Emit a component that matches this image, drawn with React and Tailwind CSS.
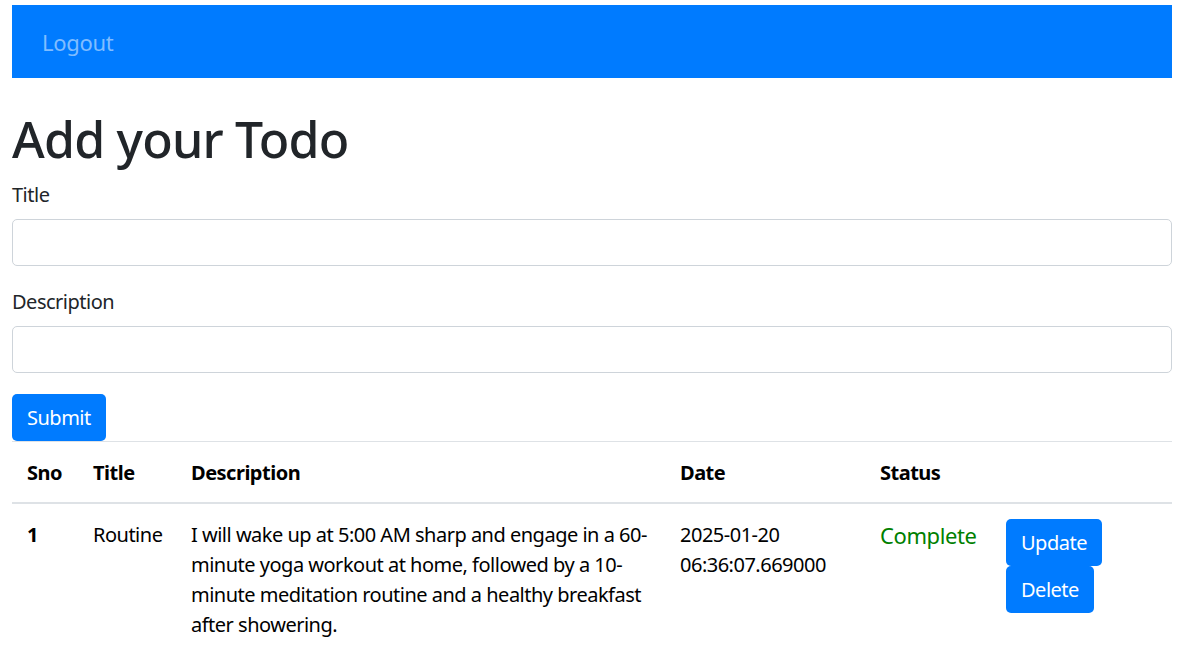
import React from 'react';

const todos = [
  {
    sno: 1,
    title: 'Routine',
    lines: [
      'I will wake up at 5:00 AM sharp and engage in a 60-',
      'minute yoga workout at home, followed by a 10-',
      'minute meditation routine and a healthy breakfast',
      'after showering.',
    ],
    date: '2025-01-20 06:36:07.669000',
    status: 'Complete',
  },
];

export default function App() {
  return (
    <div
      className="min-h-screen bg-white pl-[12px] pr-[9px] pt-[5px] text-[20px] leading-[30px] tracking-[-0.5px] text-[#212529]"
      style={{ fontFamily: '"Noto Sans", "Open Sans", sans-serif' }}
    >
      {/* Navbar */}
      <nav className="flex h-[73px] items-center bg-[#007bff] pl-[30px]">
        <a href="#" className="text-[22px] leading-[30px] tracking-[-0.3px] text-[#80bdff]">
          Logout
        </a>
      </nav>

      <h1 className="mt-[31px] mb-[11px] text-[50px] font-medium leading-[60px] tracking-[-0.8px]">
        Add your Todo
      </h1>

      <form onSubmit={(e) => e.preventDefault()}>
        <div className="mb-[21px]">
          <label className="mb-[9px] block">Title</label>
          <input
            type="text"
            className="block h-[47px] w-full rounded-[5px] border border-[#ced4da] px-[15px]"
          />
        </div>
        <div className="mb-[21px]">
          <label className="mb-[9px] block">Description</label>
          <input
            type="text"
            className="block h-[47px] w-full rounded-[5px] border border-[#ced4da] px-[15px]"
          />
        </div>
        <button
          type="submit"
          className="h-[47px] rounded-[5px] bg-[#007bff] px-[15px] text-white"
        >
          Submit
        </button>
      </form>

      {/* Todo table */}
      <table className="w-full table-fixed border-collapse text-black">
        <colgroup>
          <col className="w-[66px]" />
          <col className="w-[98px]" />
          <col className="w-[489px]" />
          <col className="w-[200px]" />
          <col className="w-[126px]" />
          <col className="w-[181px]" />
        </colgroup>
        <thead>
          <tr>
            <th className="border-t border-b-2 border-[#dee2e6] px-[15px] pt-[16px] pb-[14px] text-left font-bold">Sno</th>
            <th className="border-t border-b-2 border-[#dee2e6] px-[15px] pt-[16px] pb-[14px] text-left font-bold">Title</th>
            <th className="border-t border-b-2 border-[#dee2e6] px-[15px] pt-[16px] pb-[14px] text-left font-bold">Description</th>
            <th className="border-t border-b-2 border-[#dee2e6] px-[15px] pt-[16px] pb-[14px] text-left font-bold">Date</th>
            <th className="border-t border-b-2 border-[#dee2e6] px-[15px] pt-[16px] pb-[14px] text-left font-bold">Status</th>
            <th className="border-t border-b-2 border-[#dee2e6] p-[15px]"></th>
          </tr>
        </thead>
        <tbody>
          {todos.map((todo) => (
            <tr key={todo.sno}>
              <th className="px-[15px] pt-[16px] pb-[14px] text-left align-top font-bold">{todo.sno}</th>
              <td className="px-[15px] pt-[16px] pb-[14px] align-top">{todo.title}</td>
              <td className="px-[15px] pt-[16px] pb-[14px] align-top">
                {todo.lines.map((line) => (
                  <span key={line} className="block whitespace-nowrap">
                    {line}
                  </span>
                ))}
              </td>
              <td className="px-[15px] pt-[16px] pb-[14px] align-top">{todo.date}</td>
              <td className="px-[15px] pt-[16px] pb-[14px] align-top">
                <span className="text-[22px] leading-[30px] tracking-[-0.4px] text-[#008000]">{todo.status}</span>
              </td>
              <td className="p-[15px] align-top">
                <button className="block h-[47px] rounded-[5px] bg-[#007bff] px-[15px] text-white">
                  Update
                </button>
                <button className="block h-[47px] rounded-[5px] bg-[#007bff] px-[15px] text-white">
                  Delete
                </button>
              </td>
            </tr>
          ))}
        </tbody>
      </table>
    </div>
  );
}
